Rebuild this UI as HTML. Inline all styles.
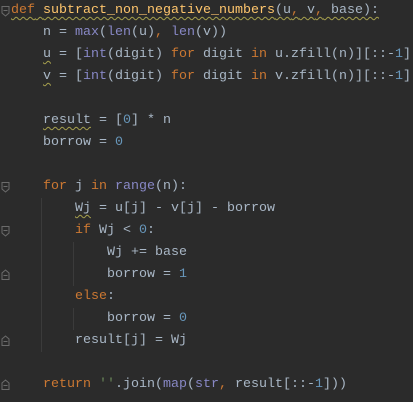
<!DOCTYPE html>
<html><head><meta charset="utf-8"><style>
html,body{margin:0;padding:0;}
body{width:413px;height:402px;background:#2b2b2b;overflow:hidden;position:relative;}
.code{position:absolute;left:11px;top:0;font-family:"Liberation Mono",monospace;font-size:13.33px;line-height:22px;color:#a9b7c6;white-space:pre;}
.k{color:#cc7832}.f{color:#ffc66d}.n{color:#6897bb}.b{color:#8888c6}.s{color:#6a8759}
.w{text-decoration:underline wavy #a6a04d;text-decoration-thickness:1px;text-underline-offset:3px}
.g{position:absolute;width:1px;background:#3b3b3b}
.fold{position:absolute;left:1px;width:9px;height:12px}
</style></head><body>
<div class="g" style="left:41px;top:198px;height:154px"></div>
<div class="g" style="left:73px;top:242px;height:44px"></div>
<div class="g" style="left:73px;top:308px;height:22px"></div>
<svg class="fold" style="top:5px" viewBox="0 0 9 12"><path d="M1 1.5H8V8L4.5 11L1 8Z" fill="none" stroke="#6b6b6b"/><path d="M2.5 5.5H6.5" stroke="#6b6b6b"/></svg>
<svg class="fold" style="top:181px" viewBox="0 0 9 12"><path d="M1 1.5H8V8L4.5 11L1 8Z" fill="none" stroke="#6b6b6b"/><path d="M2.5 5.5H6.5" stroke="#6b6b6b"/></svg>
<svg class="fold" style="top:225px" viewBox="0 0 9 12"><path d="M1 1.5H8V8L4.5 11L1 8Z" fill="none" stroke="#6b6b6b"/><path d="M2.5 5.5H6.5" stroke="#6b6b6b"/></svg>
<svg class="fold" style="top:269px" viewBox="0 0 9 12"><path d="M1 10.5H8V4L4.5 1L1 4Z" fill="none" stroke="#6b6b6b"/><path d="M2.5 6.5H6.5" stroke="#6b6b6b"/></svg>
<svg class="fold" style="top:335px" viewBox="0 0 9 12"><path d="M1 10.5H8V4L4.5 1L1 4Z" fill="none" stroke="#6b6b6b"/><path d="M2.5 6.5H6.5" stroke="#6b6b6b"/></svg>
<svg class="fold" style="top:379px" viewBox="0 0 9 12"><path d="M1 10.5H8V4L4.5 1L1 4Z" fill="none" stroke="#6b6b6b"/><path d="M2.5 6.5H6.5" stroke="#6b6b6b"/></svg>
<div class="code"><span class="w"><span class="k">def</span> <span class="f">subtract_non_negative_numbers</span>(u<span class="k">,</span> v<span class="k">,</span> base):</span>
    n = <span class="b">max</span>(<span class="b">len</span>(u)<span class="k">,</span> <span class="b">len</span>(v))
    <span class="w">u</span> = [<span class="b">int</span>(digit) <span class="k">for</span> digit <span class="k">in</span> u.zfill(n)][::-<span class="n">1</span>]
    <span class="w">v</span> = [<span class="b">int</span>(digit) <span class="k">for</span> digit <span class="k">in</span> v.zfill(n)][::-<span class="n">1</span>]

    <span class="w">result</span> = [<span class="n">0</span>] * n
    borrow = <span class="n">0</span>

    <span class="k">for</span> j <span class="k">in</span> <span class="b">range</span>(n):
        <span class="w">Wj</span> = u[j] - v[j] - borrow
        <span class="k">if</span> Wj &lt; <span class="n">0</span>:
            Wj += base
            borrow = <span class="n">1</span>
        <span class="k">else</span>:
            borrow = <span class="n">0</span>
        result[j] = Wj

    <span class="k">return</span> <span class="s">''</span>.join(<span class="b">map</span>(<span class="b">str</span><span class="k">,</span> result[::-<span class="n">1</span>]))</div>
</body></html>
